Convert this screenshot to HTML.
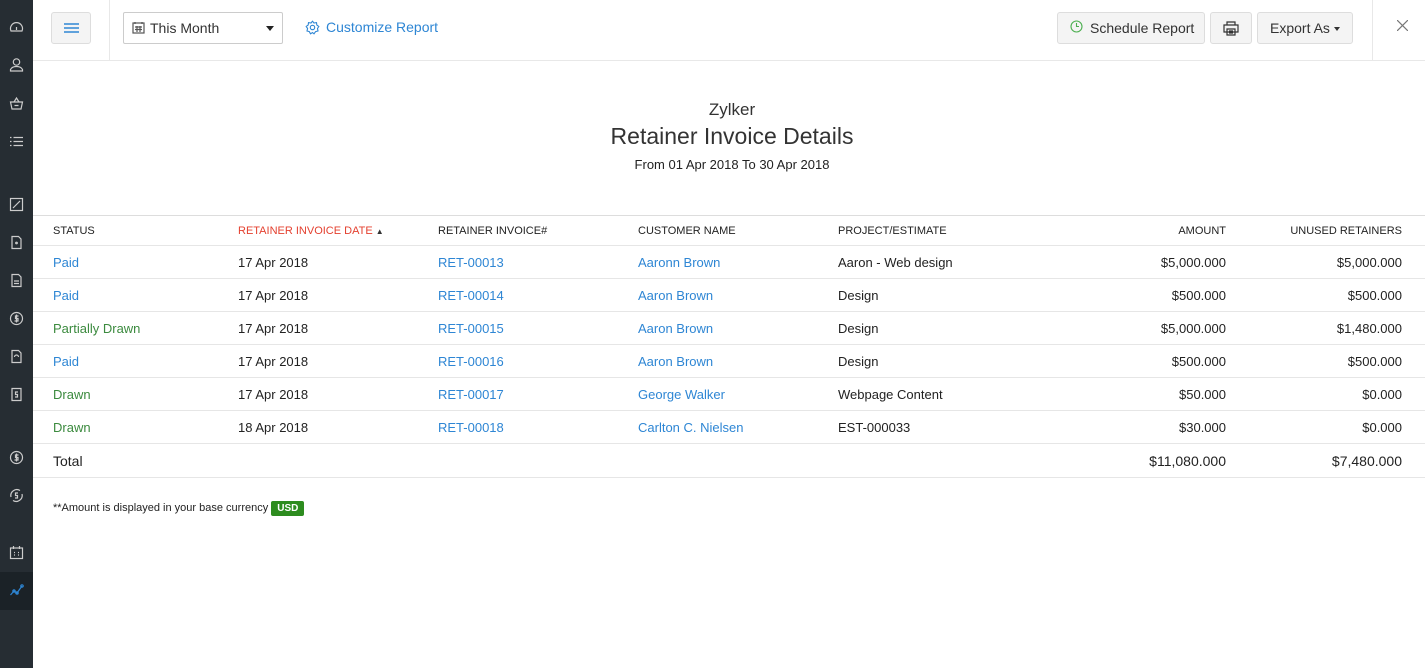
<!DOCTYPE html>
<html><head><style>
*{margin:0;padding:0;box-sizing:border-box}
body{width:1425px;height:668px;overflow:hidden;background:#fff;font-family:"Liberation Sans",sans-serif;color:#222;position:relative;font-size:13px}
.sb{position:absolute;left:0;top:0;width:33px;height:668px;background:#262d33}
.sb .act{position:absolute;left:0;top:572px;width:33px;height:38px;background:#1b2227}
.ic{position:absolute;left:9px;width:15px;height:15px}
.top{position:absolute;left:33px;top:0;right:0;height:61px;border-bottom:1px solid #e8e8e8}
.btn{position:absolute;top:12px;height:32px;background:#f4f4f4;border:1px solid #ddd;border-radius:3px;font-size:14px;color:#333;line-height:30px}
.abs{position:absolute}
table{position:absolute;left:33px;top:215px;width:1392px;border-collapse:collapse}
td,th{height:33px;border-bottom:1px solid #e6e6e6;padding:0;text-align:left;font-size:13px;white-space:nowrap}
th{height:30px;font-weight:normal;font-size:11px;color:#222}
tr:first-child th{border-top:1px solid #ddd}
.r{text-align:right}
.b{color:#2e86d4}.g{color:#3b8a3e}
</style></head><body>
<div class="sb"><div class="act"></div>
<svg class="ic" style="top:20px" viewBox="0 0 15 15" fill="none" stroke="#ccc" stroke-width="1.2"><path d="M2 11A6 6 0 1 1 13 11Z"/><path d="M7.5 10V7"/></svg>
<svg class="ic" style="top:57px" viewBox="0 0 15 15" fill="none" stroke="#ccc" stroke-width="1.2"><circle cx="7.5" cy="5" r="3.2"/><path d="M1.5 14V12.5Q3 9.5 7.5 9.5Q12 9.5 13.5 12.5V14Z"/></svg>
<svg class="ic" style="top:96px" viewBox="0 0 15 15" fill="none" stroke="#ccc" stroke-width="1.2"><path d="M1.5 6H13.5L12 13H3Z"/><path d="M5 6L7.5 2L10 6M5.5 9.5H9.5"/></svg>
<svg class="ic" style="top:134px" viewBox="0 0 15 15" fill="none" stroke="#ccc" stroke-width="1.2"><path d="M1 3.5H2.5M4.5 3.5H14M1 7.5H2.5M4.5 7.5H14M1 11.5H2.5M4.5 11.5H14"/></svg>
<svg class="ic" style="top:197px" viewBox="0 0 15 15" fill="none" stroke="#ccc" stroke-width="1.2"><rect x="1.5" y="1.5" width="12" height="12"/><path d="M4 11L11 4"/></svg>
<svg class="ic" style="top:235px" viewBox="0 0 15 15" fill="none" stroke="#ccc" stroke-width="1.2"><path d="M3 1.5H9.5L12 4V13.5H3Z"/><circle cx="7.5" cy="8" r=".8"/></svg>
<svg class="ic" style="top:273px" viewBox="0 0 15 15" fill="none" stroke="#ccc" stroke-width="1.2"><path d="M3 1.5H9.5L12 4V13.5H3Z"/><path d="M5 8H10M5 10.5H10"/></svg>
<svg class="ic" style="top:311px" viewBox="0 0 15 15" fill="none" stroke="#ccc" stroke-width="1.2"><circle cx="7.5" cy="7.5" r="6"/><path d="M9.5 5H6.5V7.5H9V10H5.5M7.5 3.5V11.5"/></svg>
<svg class="ic" style="top:349px" viewBox="0 0 15 15" fill="none" stroke="#ccc" stroke-width="1.2"><path d="M3 1.5H9.5L12 4V13.5H3Z"/><path d="M5.5 8A2 2 0 0 1 9.5 8"/></svg>
<svg class="ic" style="top:387px" viewBox="0 0 15 15" fill="none" stroke="#ccc" stroke-width="1.2"><path d="M3 1.5H12V13.5H3Z"/><path d="M9 5H6.5V7.5H8.5V10H6"/></svg>
<svg class="ic" style="top:450px" viewBox="0 0 15 15" fill="none" stroke="#ccc" stroke-width="1.2"><circle cx="7.5" cy="7.5" r="6"/><path d="M9.5 5H6.5V7.5H9V10H5.5M7.5 3.5V11.5"/></svg>
<svg class="ic" style="top:488px" viewBox="0 0 15 15" fill="none" stroke="#ccc" stroke-width="1.2"><path d="M2 9A6 6 0 0 1 11 2.5M13 6A6 6 0 0 1 4 12.5"/><path d="M9 5H6.5V7.5H8.5V10H6"/></svg>
<svg class="ic" style="top:545px" viewBox="0 0 15 15" fill="none" stroke="#ccc" stroke-width="1.2"><rect x="1.5" y="3" width="12" height="10.5"/><path d="M4.5 1V4M10.5 1V4M5 7.5H6M9 7.5H10M5 10H6M9 10H10"/></svg>
<svg class="ic" style="top:583px" viewBox="0 0 15 15" fill="none" stroke="#2e86d4" stroke-width="1.2"><path d="M1.5 12L5 8L8 10L13 3"/><circle cx="5" cy="8" r="1.2"/><circle cx="8" cy="10" r="1.2"/><circle cx="13" cy="3" r="1.2"/></svg>
</div>
<div class="top">
 <div class="btn" style="left:18px;width:40px;top:12px;height:32px"><svg style="position:absolute;left:12px;top:9px" width="15" height="12" viewBox="0 0 15 12" stroke="#2e86d4" stroke-width="1.6"><path d="M0 2H15M0 6H15M0 10H15"/></svg></div>
 <div class="abs" style="left:76px;top:0;width:1px;height:61px;background:#e8e8e8"></div>
 <div class="abs" style="left:90px;top:12px;width:160px;height:32px;border:1px solid #ccc;border-radius:2px;font-size:14px;color:#333;line-height:30px;padding-left:26px">This Month
  <svg style="position:absolute;left:8px;top:8px" width="13" height="13" viewBox="0 0 13 13" fill="none" stroke="#555" stroke-width="1.2"><rect x="1" y="2" width="11" height="10"/><path d="M3 1V3M10 1V3M3 6H10M3 8.5H10M5 5V11M8 5V11"/></svg>
  <span style="position:absolute;right:8px;top:13px;border:4px solid transparent;border-top:5px solid #222"></span></div>
 <div class="abs" style="left:272px;top:19px;font-size:14px;color:#2e86d4;padding-left:21px">Customize Report
  <svg style="position:absolute;left:0;top:1px" width="15" height="15" viewBox="0 0 15 15" fill="none" stroke="#2e86d4" stroke-width="1.1"><circle cx="7.5" cy="7.5" r="2.2"/><path d="M7.5 1.2L9 3L11.5 2.6L11.8 5L13.8 6.5L12.5 8.5L13 11L10.6 11.6L9 13.8L7.5 12.5L5.5 13.8L4.3 11.6L2 11L2.6 8.5L1.2 6.5L3.2 5L3.5 2.6L6 3Z"/></svg></div>
 <div class="btn" style="left:1024px;width:148px;padding-left:32px">Schedule Report
  <svg style="position:absolute;left:12px;top:7px" width="13" height="13" viewBox="0 0 13 13" fill="none" stroke="#4caf50" stroke-width="1.1"><circle cx="6.5" cy="6.5" r="5.5"/><path d="M6.5 3V6.5H9"/></svg></div>
 <div class="btn" style="left:1177px;width:42px"><svg style="position:absolute;left:12px;top:8px" width="16" height="15" viewBox="0 0 16 15" fill="none" stroke="#333" stroke-width="1.2"><path d="M4 4V1H12V4M1 4H15V11H1Z M4 8H12V14H4Z M6 10H10M6 12H10"/></svg></div>
 <div class="btn" style="left:1224px;width:96px;padding-left:12px">Export As<span style="position:absolute;left:76px;top:14px;border:3.5px solid transparent;border-top:4px solid #333"></span></div>
 <div class="abs" style="left:1339px;top:0;width:1px;height:61px;background:#e8e8e8"></div>
 <svg class="abs" style="left:1364px;top:20px" width="11" height="11" viewBox="0 0 11 11" stroke="#777" stroke-width="1.2"><path d="M0 0L11 11M11 0L0 11"/></svg>
</div>
<div class="abs" style="left:33px;width:1398px;top:100px;text-align:center">
 <div style="font-size:17px;color:#333">Zylker</div>
 <div style="font-size:23px;color:#333;margin-top:3px">Retainer Invoice Details</div>
 <div style="font-size:13px;margin-top:7px">From 01 Apr 2018 To 30 Apr 2018</div>
</div>
<table>
<colgroup><col style="width:205px"><col style="width:200px"><col style="width:200px"><col style="width:200px"><col style="width:200px"><col style="width:188px"><col style="width:199px"></colgroup>
<tr><th style="padding-left:20px">STATUS</th><th style="color:#e4402f">RETAINER INVOICE DATE <span style="color:#333;font-size:8px">▲</span></th><th>RETAINER INVOICE#</th><th>CUSTOMER NAME</th><th>PROJECT/ESTIMATE</th><th class="r">AMOUNT</th><th class="r" style="padding-right:23px">UNUSED RETAINERS</th></tr>
<tr><td class="b" style="padding-left:20px">Paid</td><td>17 Apr 2018</td><td class="b">RET-00013</td><td class="b">Aaronn Brown</td><td>Aaron - Web design</td><td class="r">$5,000.000</td><td class="r" style="padding-right:23px">$5,000.000</td></tr>
<tr><td class="b" style="padding-left:20px">Paid</td><td>17 Apr 2018</td><td class="b">RET-00014</td><td class="b">Aaron Brown</td><td>Design</td><td class="r">$500.000</td><td class="r" style="padding-right:23px">$500.000</td></tr>
<tr><td class="g" style="padding-left:20px">Partially Drawn</td><td>17 Apr 2018</td><td class="b">RET-00015</td><td class="b">Aaron Brown</td><td>Design</td><td class="r">$5,000.000</td><td class="r" style="padding-right:23px">$1,480.000</td></tr>
<tr><td class="b" style="padding-left:20px">Paid</td><td>17 Apr 2018</td><td class="b">RET-00016</td><td class="b">Aaron Brown</td><td>Design</td><td class="r">$500.000</td><td class="r" style="padding-right:23px">$500.000</td></tr>
<tr><td class="g" style="padding-left:20px">Drawn</td><td>17 Apr 2018</td><td class="b">RET-00017</td><td class="b">George Walker</td><td>Webpage Content</td><td class="r">$50.000</td><td class="r" style="padding-right:23px">$0.000</td></tr>
<tr><td class="g" style="padding-left:20px">Drawn</td><td>18 Apr 2018</td><td class="b">RET-00018</td><td class="b">Carlton C. Nielsen</td><td>EST-000033</td><td class="r">$30.000</td><td class="r" style="padding-right:23px">$0.000</td></tr>
<tr><td style="padding-left:20px;height:34px;font-size:14px">Total</td><td></td><td></td><td></td><td></td><td class="r" style="font-size:14px">$11,080.000</td><td class="r" style="padding-right:23px;font-size:14px">$7,480.000</td></tr>
</table>
<div class="abs" style="left:53px;top:502px;font-size:11px">**Amount is displayed in your base currency <span style="background:#2d8c1f;color:#fff;font-weight:bold;font-size:10px;padding:2px 6px;border-radius:2px">USD</span></div>
</body></html>
